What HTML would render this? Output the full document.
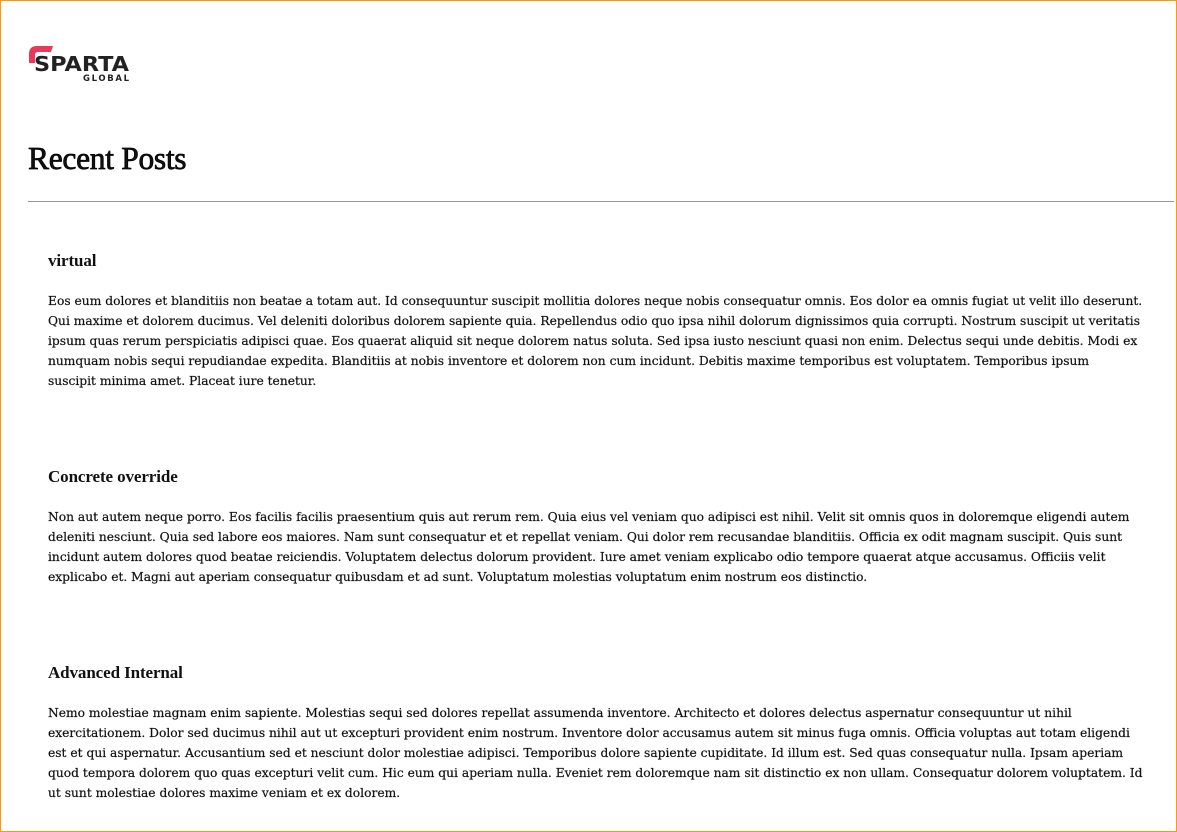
<!DOCTYPE html>
<html><head><meta charset="utf-8"><style>
html,body{margin:0;padding:0;background:#fff}
body{width:1175px;height:830px;border:1px solid #f90;position:relative;overflow:hidden;font-family:"DejaVu Serif","Liberation Serif",serif;color:#111}
.logo{position:absolute;left:26px;top:42px}
h1{position:absolute;left:27px;top:140px;margin:0;font-size:31.5px;font-weight:normal;font-family:"Liberation Serif",serif;letter-spacing:-0.3px;-webkit-text-stroke:0.7px #000}
.hr{position:absolute;left:27px;top:200px;width:1146px;height:1px;background:#999}
.post{position:absolute;left:47px}
.post h3{margin:0;font-size:17px;font-weight:bold;font-family:"Liberation Serif",serif;height:20px;line-height:20px;letter-spacing:-0.1px}
.post p{margin:20px 0 0;font-size:12.27px;line-height:20px;white-space:nowrap;letter-spacing:0;-webkit-text-stroke:0.2px #111}
</style></head><body>
<div class="logo"><svg width="106" height="42" viewBox="0 0 106 42">
<path d="M2 20 L2 11 Q2 3 10 3 L26 3 L24 9 L11 9 Q8 9 8 12 L8 20 Z" fill="#e8385b"/>
<text x="7" y="28" font-family="DejaVu Sans" font-weight="bold" font-size="20" fill="#222" textLength="95" lengthAdjust="spacingAndGlyphs">SPARTA</text>
<text x="56" y="38" font-family="DejaVu Sans" font-weight="bold" font-size="8.5" fill="#222" textLength="46" lengthAdjust="spacing">GLOBAL</text>
</svg></div>
<h1>Recent Posts</h1>
<div class="hr"></div>
<div class="post" style="top:250px"><h3>virtual</h3><p>Eos eum dolores et blanditiis non beatae a totam aut. Id consequuntur suscipit mollitia dolores neque nobis consequatur omnis. Eos dolor ea omnis fugiat ut velit illo deserunt.<br>Qui maxime et dolorem ducimus. Vel deleniti doloribus dolorem sapiente quia. Repellendus odio quo ipsa nihil dolorum dignissimos quia corrupti. Nostrum suscipit ut veritatis<br>ipsum quas rerum perspiciatis adipisci quae. Eos quaerat aliquid sit neque dolorem natus soluta. Sed ipsa iusto nesciunt quasi non enim. Delectus sequi unde debitis. Modi ex<br>numquam nobis sequi repudiandae expedita. Blanditiis at nobis inventore et dolorem non cum incidunt. Debitis maxime temporibus est voluptatem. Temporibus ipsum<br>suscipit minima amet. Placeat iure tenetur.</p></div>
<div class="post" style="top:466px"><h3>Concrete override</h3><p>Non aut autem neque porro. Eos facilis facilis praesentium quis aut rerum rem. Quia eius vel veniam quo adipisci est nihil. Velit sit omnis quos in doloremque eligendi autem<br>deleniti nesciunt. Quia sed labore eos maiores. Nam sunt consequatur et et repellat veniam. Qui dolor rem recusandae blanditiis. Officia ex odit magnam suscipit. Quis sunt<br>incidunt autem dolores quod beatae reiciendis. Voluptatem delectus dolorum provident. Iure amet veniam explicabo odio tempore quaerat atque accusamus. Officiis velit<br>explicabo et. Magni aut aperiam consequatur quibusdam et ad sunt. Voluptatum molestias voluptatum enim nostrum eos distinctio.</p></div>
<div class="post" style="top:662px"><h3>Advanced Internal</h3><p>Nemo molestiae magnam enim sapiente. Molestias sequi sed dolores repellat assumenda inventore. Architecto et dolores delectus aspernatur consequuntur ut nihil<br>exercitationem. Dolor sed ducimus nihil aut ut excepturi provident enim nostrum. Inventore dolor accusamus autem sit minus fuga omnis. Officia voluptas aut totam eligendi<br>est et qui aspernatur. Accusantium sed et nesciunt dolor molestiae adipisci. Temporibus dolore sapiente cupiditate. Id illum est. Sed quas consequatur nulla. Ipsam aperiam<br>quod tempora dolorem quo quas excepturi velit cum. Hic eum qui aperiam nulla. Eveniet rem doloremque nam sit distinctio ex non ullam. Consequatur dolorem voluptatem. Id<br>ut sunt molestiae dolores maxime veniam et ex dolorem.</p></div>
</body></html>
